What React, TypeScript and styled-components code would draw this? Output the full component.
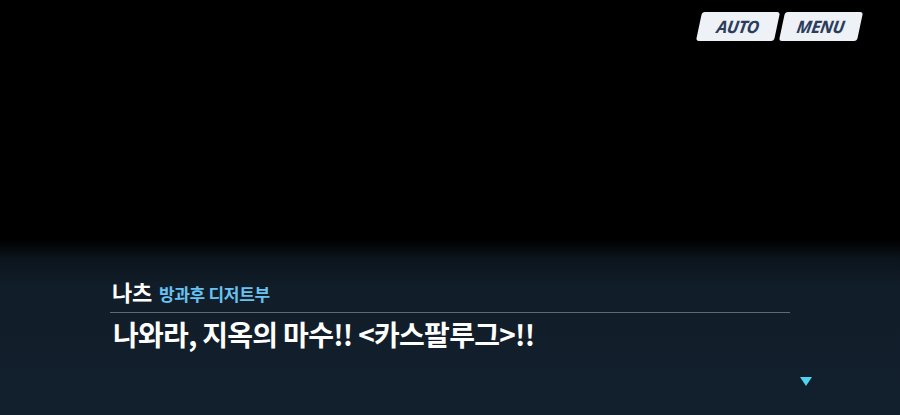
import React from "react";
import styled, { createGlobalStyle } from "styled-components";

const GlobalStyle = createGlobalStyle`
	html, body {
		margin: 0;
		padding: 0;
		background: #000;
	}
	body {
		font-family: "Noto Sans CJK KR", "Noto Sans", sans-serif;
	}
`;

const App = () => {
	return (
		<Screen>
			<GlobalStyle />
			<TopBar>
				<MenuButton>
					<span>AUTO</span>
				</MenuButton>
				<MenuButton>
					<span>MENU</span>
				</MenuButton>
			</TopBar>

			<DialogBox>
				<NameRow>
					<SpeakerName>나츠</SpeakerName>
					<SpeakerGroup>방과후 디저트부</SpeakerGroup>
				</NameRow>
				<Divider />
				<Line>나와라, 지옥의 마수!! &lt;카스팔루그&gt;!!</Line>
				<NextRow>
					<NextArrow viewBox="0 0 12 9">
						<path d="M0 0 H12 L6 9 Z" fill="#4fd3ee" />
					</NextArrow>
				</NextRow>
			</DialogBox>
		</Screen>
	);
};

const Screen = styled.div`
	width: 900px;
	height: 415px;
	background: #000;
	display: flex;
	flex-direction: column;
	justify-content: space-between;
	overflow: hidden;
`;

const TopBar = styled.div`
	display: flex;
	justify-content: flex-end;
	gap: 5px;
	padding: 12px 40px 0 0;
`;

const MenuButton = styled.div`
	width: 78px;
	height: 29px;
	background: #eef1f5;
	border-radius: 3px;
	transform: skewX(-12deg);
	display: flex;
	align-items: center;
	justify-content: center;
	box-shadow: 0 1px 2px rgba(0, 0, 0, 0.4);

	span {
		transform: skewX(4deg);
		font-family: "Noto Sans", "Open Sans", sans-serif;
		font-style: italic;
		font-weight: 700;
		font-size: 17px;
		letter-spacing: -0.4px;
		color: #2b3d5c;
	}
`;

const DialogBox = styled.div`
	height: 175px;
	background: linear-gradient(
		to bottom,
		#000 0px,
		#0b141c 18px,
		#111e2a 50px,
		#121f2c 100%
	);
	padding: 36px 110px 0 110px;
	box-sizing: border-box;
	display: flex;
	flex-direction: column;
`;

const NameRow = styled.div`
	display: flex;
	align-items: baseline;
	gap: 7px;
	padding-left: 2px;
	height: 36px;
`;

const SpeakerName = styled.span`
	font-size: 22px;
	font-weight: 700;
	color: #ffffff;
	letter-spacing: -0.3px;
	line-height: 30px;
`;

const SpeakerGroup = styled.span`
	font-size: 17px;
	font-weight: 700;
	color: #69c3f2;
	letter-spacing: -0.3px;
`;

const Divider = styled.div`
	height: 1px;
	background: #5d6a77;
`;

const Line = styled.p`
	margin: 2px 0 0 3px;
	font-size: 28px;
	font-weight: 700;
	color: #ffffff;
	letter-spacing: -0.7px;
	line-height: 38px;
`;

const NextRow = styled.div`
	display: flex;
	justify-content: flex-end;
	margin: 24px -22px 0 0;
`;

const NextArrow = styled.svg`
	width: 12px;
	height: 9px;
`;

export default App;
